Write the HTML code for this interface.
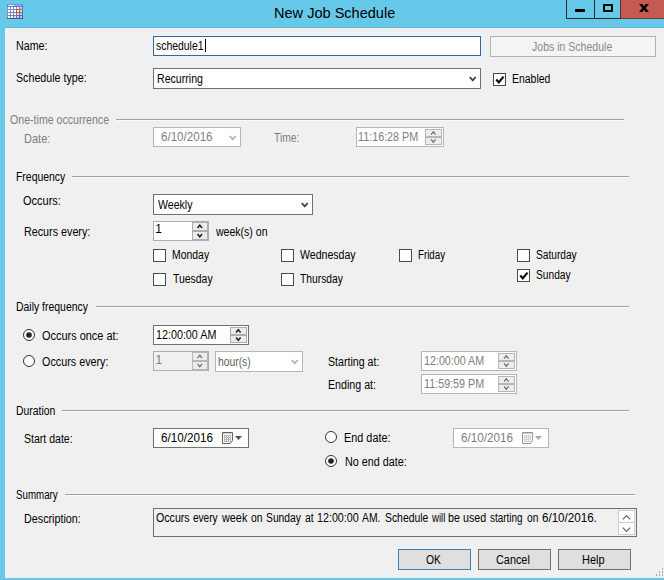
<!DOCTYPE html>
<html>
<head>
<meta charset="utf-8">
<title>New Job Schedule</title>
<style>
html,body{margin:0;padding:0;}
body{width:664px;height:580px;overflow:hidden;background:#67c9e9;position:relative;font-family:"Liberation Sans",sans-serif;font-size:11px;color:#000;}
*{box-sizing:border-box;}
.abs,.lbl,.box,.line,.cb,.btn{position:absolute;}
#client{position:absolute;left:5px;top:28px;width:659px;height:550px;background:#f0f0f0;}
.lbl{white-space:nowrap;font-size:12px;line-height:14px;height:14px;transform-origin:0 0;}
.line{height:2px;border-top:1px solid #a0a0a0;background:#fbfbfb;}
.box{background:#fff;border:1px solid #707070;}
.box.sp{border-color:#abadb3;}
.box.d{background:#f0f0f0;}
.box.dw{border-color:#b4b6bb;}
.cb{width:13px;height:13px;border:1px solid #4a4a4a;background:#fff;}
.btn{border:1px solid #707070;background:#dfdfdf;}
svg{position:absolute;overflow:visible;}
</style>
</head>
<body>
<div id="client"></div>

<svg style="left:7px;top:4px;" width="16" height="15" viewBox="0 0 16 15"><defs><linearGradient id="ig" x1="0" y1="0" x2="1" y2="1"><stop offset="0" stop-color="#93a4cf"/><stop offset="0.6" stop-color="#6f80b0"/><stop offset="1" stop-color="#46588a"/></linearGradient></defs><rect x="0" y="0" width="16" height="15" fill="url(#ig)"/><rect x="0" y="14" width="16" height="1" fill="#3d4d78" fill-opacity="0.7"/><rect x="0" y="0" width="16" height="3" fill="#4b7be0"/><rect x="0" y="0" width="16" height="1" fill="#6d96ea"/><rect x="1" y="1" width="6" height="1" fill="#eef3fd"/><rect x="7" y="1" width="8" height="1" fill="#8db0f2"/><rect x="1" y="3" width="2" height="2" fill="#fff"/><rect x="1" y="6" width="2" height="2" fill="#fff"/><rect x="1" y="9" width="2" height="2" fill="#fff"/><rect x="1" y="12" width="2" height="2" fill="#fff"/><rect x="4" y="3" width="2" height="2" fill="#fff"/><rect x="4" y="6" width="2" height="2" fill="#fff"/><rect x="4" y="9" width="2" height="2" fill="#fff"/><rect x="4" y="12" width="2" height="2" fill="#fff"/><rect x="7" y="3" width="2" height="2" fill="#fff"/><rect x="7" y="6" width="2" height="2" fill="#fff"/><rect x="7" y="9" width="2" height="2" fill="#fff"/><rect x="7" y="12" width="2" height="2" fill="#d5e0f6"/><rect x="10" y="3" width="2" height="2" fill="#fff"/><rect x="10" y="6" width="2" height="2" fill="#fff"/><rect x="10" y="9" width="2" height="2" fill="#d9e6fb"/><rect x="10" y="12" width="2" height="2" fill="#c3d2ee"/><path d="M13 3 H15 L13 5 Z" fill="#fff"/><path d="M15 3 V5 H13 Z" fill="#b9c6e6"/><rect x="13" y="6" width="2" height="2" fill="#d3def5"/><rect x="13" y="9" width="2" height="2" fill="#c3d2ef"/><rect x="13" y="12" width="2" height="2" fill="#b3c3e3"/><rect x="9.5" y="5.5" width="3" height="3" fill="#fff" stroke="#e24a12"/></svg>
<div class="abs" style="left:620px;top:0;width:44px;height:19px;background:#c55a50;border-bottom:1px solid #663a37;"></div>
<div class="abs" style="left:5px;top:27px;width:659px;height:1px;background:#62b4d4;"></div>
<div class="abs" style="left:566px;top:0;width:1px;height:19px;background:#2e2a2a;"></div>
<div class="abs" style="left:594px;top:0;width:1px;height:19px;background:#2e2a2a;"></div>
<div class="abs" style="left:620px;top:0;width:1px;height:19px;background:#5a3030;"></div>
<div class="abs" style="left:566px;top:18px;width:55px;height:1px;background:#2e2a2a;"></div>
<div class="abs" style="left:575px;top:9px;width:10px;height:3px;background:#000;"></div>
<div class="abs" style="left:603px;top:4px;width:10px;height:8px;border:2px solid #000;"></div>
<svg style="left:639px;top:4px;" width="10" height="8" viewBox="0 0 10 8"><path d="M0 0 H3.2 L5 2.2 L6.8 0 H10 L6.6 4 L10 8 H6.8 L5 5.8 L3.2 8 H0 L3.4 4 Z" fill="#000"/></svg>

<div class="lbl" style="left:15.91px;top:39px;transform:scaleX(0.8917);">Name:</div>
<div class="box " style="left:153px;top:36px;width:328px;height:20px;border-color:#30699f;"></div>
<div class="lbl" style="left:155.83px;top:39px;transform:scaleX(0.8685);">schedule1</div>
<div class="abs" style="left:205px;top:39px;width:1px;height:13px;background:#000;"></div>
<div class="btn" style="left:490px;top:36px;width:166px;height:21px;background:#f4f4f4;border-color:#adb2b5;"></div>
<div class="lbl" style="left:532.18px;top:40px;transform:scaleX(0.8782);color:#8a8a8a;">Jobs in Schedule</div>
<div class="lbl" style="left:16.36px;top:71px;transform:scaleX(0.8894);">Schedule type:</div>
<div class="box " style="left:153px;top:68px;width:328px;height:21px;"></div>
<div class="lbl" style="left:156.92px;top:72px;transform:scaleX(0.8836);">Recurring</div>
<svg style="left:468.7px;top:75.6px;" width="8" height="6" viewBox="0 0 8 6"><path d="M0.8 1 L3.75 4.4 L6.7 1" fill="none" stroke="#444" stroke-width="1.9"/></svg>
<div class="cb" style="left:493px;top:73px;"></div>
<svg style="left:493px;top:73px;" width="13" height="13" viewBox="0 0 13 13"><path d="M3.2 6.5 L5.8 9.3 L10.6 3.6" fill="none" stroke="#111" stroke-width="2.2"/></svg>
<div class="lbl" style="left:511.93px;top:72px;transform:scaleX(0.8710);">Enabled</div>
<div class="lbl" style="left:10.36px;top:113px;transform:scaleX(0.8842);color:#7e7e7e;">One-time occurrence</div>
<div class="line" style="left:116px;top:119px;width:508px;"></div>
<div class="lbl" style="left:23.88px;top:132px;transform:scaleX(0.9196);color:#7e7e7e;">Date:</div>
<div class="box dw" style="left:153px;top:127px;width:88px;height:20px;"></div>
<div class="lbl" style="left:161.07px;top:130px;transform:scaleX(0.9648);color:#7e7e7e;">6/10/2016</div>
<svg style="left:228.7px;top:134.6px;" width="8" height="6" viewBox="0 0 8 6"><path d="M0.8 1 L3.75 4.4 L6.7 1" fill="none" stroke="#b4b4b4" stroke-width="1.9"/></svg>
<div class="lbl" style="left:273.99px;top:131px;transform:scaleX(0.8566);color:#7e7e7e;">Time:</div>
<div class="box dw" style="left:356px;top:127px;width:88px;height:20px;"></div>
<div class="lbl" style="left:358.4px;top:130px;transform:scaleX(0.8966);color:#7e7e7e;">11:16:28 PM</div>
<svg style="left:425px;top:129px;" width="17" height="16" viewBox="0 0 17 16"><rect x="0.5" y="0.5" width="16" height="7" fill="#ededed" stroke="#b4b6bb"/><rect x="0.5" y="8.5" width="16" height="7" fill="#ededed" stroke="#b4b6bb"/><path d="M6.0 5.6 L8.3 2.8 L10.6 5.6" fill="none" stroke="#6f6f6f" stroke-width="1.2"/><path d="M6.0 10.4 L8.3 13.2 L10.6 10.4" fill="none" stroke="#6f6f6f" stroke-width="1.2"/></svg>
<div class="lbl" style="left:15.93px;top:170px;transform:scaleX(0.8682);">Frequency</div>
<div class="line" style="left:72px;top:176px;width:557px;"></div>
<div class="lbl" style="left:23.44px;top:194px;transform:scaleX(0.9157);">Occurs:</div>
<div class="box " style="left:153px;top:194px;width:160px;height:21px;"></div>
<div class="lbl" style="left:157.5px;top:198px;transform:scaleX(0.8795);">Weekly</div>
<svg style="left:300.7px;top:201.6px;" width="8" height="6" viewBox="0 0 8 6"><path d="M0.8 1 L3.75 4.4 L6.7 1" fill="none" stroke="#444" stroke-width="1.9"/></svg>
<div class="lbl" style="left:23.9px;top:225px;transform:scaleX(0.8958);">Recurs every:</div>
<div class="box sp" style="left:153px;top:221px;width:56px;height:20px;"></div>
<div class="lbl" style="left:155.2px;top:222px;">1</div>
<svg style="left:192px;top:222px;" width="16" height="18" viewBox="0 0 16 18"><rect x="0.5" y="0.5" width="15" height="8" fill="#ececec" stroke="#abadb3"/><rect x="0.5" y="9.5" width="15" height="8" fill="#ececec" stroke="#abadb3"/><path d="M5.5 6.1 L7.8 3.3 L10.1 6.1" fill="none" stroke="#202020" stroke-width="1.5"/><path d="M5.5 11.9 L7.8 14.7 L10.1 11.9" fill="none" stroke="#202020" stroke-width="1.5"/></svg>
<div class="lbl" style="left:216.1px;top:225px;transform:scaleX(0.8776);">week(s) on</div>
<div class="cb" style="left:153px;top:249px;"></div>
<div class="lbl" style="left:171.93px;top:248px;transform:scaleX(0.8695);">Monday</div>
<div class="cb" style="left:153px;top:273px;"></div>
<div class="lbl" style="left:172.58px;top:272px;transform:scaleX(0.8685);">Tuesday</div>
<div class="cb" style="left:281px;top:249px;"></div>
<div class="lbl" style="left:300.4px;top:248px;transform:scaleX(0.8810);">Wednesday</div>
<div class="cb" style="left:281px;top:273px;"></div>
<div class="lbl" style="left:300.19px;top:272px;transform:scaleX(0.8583);">Thursday</div>
<div class="cb" style="left:399px;top:249px;"></div>
<div class="lbl" style="left:417.99px;top:248px;transform:scaleX(0.8124);">Friday</div>
<div class="cb" style="left:517px;top:249px;"></div>
<div class="lbl" style="left:536.28px;top:248px;transform:scaleX(0.8463);">Saturday</div>
<div class="cb" style="left:517px;top:269px;"></div>
<svg style="left:517px;top:269px;" width="13" height="13" viewBox="0 0 13 13"><path d="M3.2 6.5 L5.8 9.3 L10.6 3.6" fill="none" stroke="#111" stroke-width="2.2"/></svg>
<div class="lbl" style="left:536.28px;top:268px;transform:scaleX(0.8497);">Sunday</div>
<div class="lbl" style="left:15.93px;top:300px;transform:scaleX(0.8703);">Daily frequency</div>
<div class="line" style="left:96px;top:306px;width:533px;"></div>
<svg style="left:23px;top:329px;" width="12" height="12" viewBox="0 0 12 12"><circle cx="6" cy="6" r="5.5" fill="#fff" stroke="#333" stroke-width="1"/><circle cx="6" cy="6" r="2.8" fill="#222"/></svg>
<div class="lbl" style="left:41.59px;top:329px;transform:scaleX(0.9109);">Occurs once at:</div>
<div class="box " style="left:153px;top:325px;width:96px;height:20px;"></div>
<div class="lbl" style="left:155.65px;top:328px;transform:scaleX(0.8954);">12:00:00 AM</div>
<svg style="left:230px;top:327px;" width="17" height="16" viewBox="0 0 17 16"><rect x="0.5" y="0.5" width="16" height="7" fill="#ececec" stroke="#abadb3"/><rect x="0.5" y="8.5" width="16" height="7" fill="#ececec" stroke="#abadb3"/><path d="M6.0 5.6 L8.3 2.8 L10.6 5.6" fill="none" stroke="#202020" stroke-width="1.5"/><path d="M6.0 10.4 L8.3 13.2 L10.6 10.4" fill="none" stroke="#202020" stroke-width="1.5"/></svg>
<svg style="left:23px;top:355px;" width="12" height="12" viewBox="0 0 12 12"><circle cx="6" cy="6" r="5.5" fill="#fff" stroke="#333" stroke-width="1"/></svg>
<div class="lbl" style="left:41.6px;top:355px;transform:scaleX(0.8986);">Occurs every:</div>
<div class="box sp d" style="left:153px;top:351px;width:56px;height:20px;"></div>
<div class="lbl" style="left:155.55px;top:353px;color:#7e7e7e;">1</div>
<svg style="left:192px;top:352px;" width="16" height="18" viewBox="0 0 16 18"><rect x="0.5" y="0.5" width="15" height="8" fill="#ededed" stroke="#b4b6bb"/><rect x="0.5" y="9.5" width="15" height="8" fill="#ededed" stroke="#b4b6bb"/><path d="M5.5 6.1 L7.8 3.3 L10.1 6.1" fill="none" stroke="#6f6f6f" stroke-width="1.2"/><path d="M5.5 11.9 L7.8 14.7 L10.1 11.9" fill="none" stroke="#6f6f6f" stroke-width="1.2"/></svg>
<div class="box dw" style="left:215px;top:351px;width:88px;height:21px;"></div>
<div class="lbl" style="left:218.4px;top:355px;transform:scaleX(0.8603);color:#606060;">hour(s)</div>
<svg style="left:290.7px;top:358.6px;" width="8" height="6" viewBox="0 0 8 6"><path d="M0.8 1 L3.75 4.4 L6.7 1" fill="none" stroke="#b4b4b4" stroke-width="1.9"/></svg>
<div class="lbl" style="left:328.36px;top:355px;transform:scaleX(0.8850);">Starting at:</div>
<div class="box dw" style="left:421px;top:351px;width:96px;height:20px;"></div>
<div class="lbl" style="left:423.81px;top:354px;transform:scaleX(0.8931);color:#7e7e7e;">12:00:00 AM</div>
<svg style="left:498px;top:353px;" width="17" height="16" viewBox="0 0 17 16"><rect x="0.5" y="0.5" width="16" height="7" fill="#ededed" stroke="#b4b6bb"/><rect x="0.5" y="8.5" width="16" height="7" fill="#ededed" stroke="#b4b6bb"/><path d="M6.0 5.6 L8.3 2.8 L10.6 5.6" fill="none" stroke="#6f6f6f" stroke-width="1.2"/><path d="M6.0 10.4 L8.3 13.2 L10.6 10.4" fill="none" stroke="#6f6f6f" stroke-width="1.2"/></svg>
<div class="lbl" style="left:327.91px;top:378px;transform:scaleX(0.8885);">Ending at:</div>
<div class="box dw" style="left:421px;top:374px;width:96px;height:20px;"></div>
<div class="lbl" style="left:423.8px;top:377px;transform:scaleX(0.8966);color:#7e7e7e;">11:59:59 PM</div>
<svg style="left:498px;top:376px;" width="17" height="16" viewBox="0 0 17 16"><rect x="0.5" y="0.5" width="16" height="7" fill="#ededed" stroke="#b4b6bb"/><rect x="0.5" y="8.5" width="16" height="7" fill="#ededed" stroke="#b4b6bb"/><path d="M6.0 5.6 L8.3 2.8 L10.6 5.6" fill="none" stroke="#6f6f6f" stroke-width="1.2"/><path d="M6.0 10.4 L8.3 13.2 L10.6 10.4" fill="none" stroke="#6f6f6f" stroke-width="1.2"/></svg>
<div class="lbl" style="left:15.93px;top:404px;transform:scaleX(0.8663);">Duration</div>
<div class="line" style="left:62px;top:410px;width:567px;"></div>
<div class="lbl" style="left:24.26px;top:432px;transform:scaleX(0.8781);">Start date:</div>
<div class="box " style="left:153px;top:428px;width:96px;height:20px;"></div>
<div class="lbl" style="left:160.91px;top:431px;transform:scaleX(0.9714);">6/10/2016</div>
<svg style="left:222px;top:432px;" width="21" height="12" viewBox="0 0 21 12"><path d="M0.5 0.5 H10.5 V8.5 L8.5 11.5 H0.5 Z" fill="#fff" stroke="#6b5e5c"/><rect x="1" y="1" width="9" height="1" fill="#d0d0d0"/><rect x="2" y="3" width="7" height="7" fill="#b4b8c6"/><rect x="3" y="4" width="1" height="1" fill="#fff"/><rect x="3" y="6" width="1" height="1" fill="#fff"/><rect x="3" y="8" width="1" height="1" fill="#fff"/><rect x="5" y="4" width="1" height="1" fill="#fff"/><rect x="5" y="6" width="1" height="1" fill="#fff"/><rect x="5" y="8" width="1" height="1" fill="#fff"/><rect x="7" y="4" width="1" height="1" fill="#fff"/><rect x="7" y="6" width="1" height="1" fill="#fff"/><rect x="7" y="8" width="1" height="1" fill="#fff"/><path d="M13 4 H20 L16.5 8 Z" fill="#44546f"/></svg>
<svg style="left:325px;top:431px;" width="12" height="12" viewBox="0 0 12 12"><circle cx="6" cy="6" r="5.5" fill="#fff" stroke="#333" stroke-width="1"/></svg>
<div class="lbl" style="left:344.49px;top:431px;transform:scaleX(0.9056);">End date:</div>
<div class="box dw" style="left:453px;top:428px;width:96px;height:20px;"></div>
<div class="lbl" style="left:460.91px;top:431px;transform:scaleX(0.9714);color:#7e7e7e;">6/10/2016</div>
<svg style="left:522px;top:432px;" width="21" height="12" viewBox="0 0 21 12"><path d="M0.5 0.5 H10.5 V8.5 L8.5 11.5 H0.5 Z" fill="#fff" stroke="#9a9494"/><rect x="1" y="1" width="9" height="1" fill="#d0d0d0"/><rect x="2" y="3" width="7" height="7" fill="#cfd1d8"/><rect x="3" y="4" width="1" height="1" fill="#fff"/><rect x="3" y="6" width="1" height="1" fill="#fff"/><rect x="3" y="8" width="1" height="1" fill="#fff"/><rect x="5" y="4" width="1" height="1" fill="#fff"/><rect x="5" y="6" width="1" height="1" fill="#fff"/><rect x="5" y="8" width="1" height="1" fill="#fff"/><rect x="7" y="4" width="1" height="1" fill="#fff"/><rect x="7" y="6" width="1" height="1" fill="#fff"/><rect x="7" y="8" width="1" height="1" fill="#fff"/><path d="M13 4 H20 L16.5 8 Z" fill="#a8aab0"/></svg>
<svg style="left:325px;top:455px;" width="12" height="12" viewBox="0 0 12 12"><circle cx="6" cy="6" r="5.5" fill="#fff" stroke="#333" stroke-width="1"/><circle cx="6" cy="6" r="2.8" fill="#222"/></svg>
<div class="lbl" style="left:344.5px;top:455px;transform:scaleX(0.8989);">No end date:</div>
<div class="lbl" style="left:16.29px;top:488px;transform:scaleX(0.8118);">Summary</div>
<div class="line" style="left:65px;top:494px;width:570px;"></div>
<div class="lbl" style="left:23.8px;top:512px;transform:scaleX(0.8963);">Description:</div>
<div class="box " style="left:153px;top:508px;width:484px;height:29px;background:#f0f0f0;border-color:#6e6e6e;"></div>
<div class="abs" id="desc" style="left:0;top:0;width:0;height:0;">
<span class="lbl" style="left:155.66px;top:511px;transform:scaleX(0.8865);">Occurs</span>
<span class="lbl" style="left:192.68px;top:511px;transform:scaleX(0.8383);">every</span>
<span class="lbl" style="left:221.6px;top:511px;transform:scaleX(0.9036);">week</span>
<span class="lbl" style="left:250.67px;top:511px;transform:scaleX(0.8653);">on</span>
<span class="lbl" style="left:266.17px;top:511px;transform:scaleX(0.8596);">Sunday</span>
<span class="lbl" style="left:304.67px;top:511px;transform:scaleX(0.8632);">at</span>
<span class="lbl" style="left:317.41px;top:511px;transform:scaleX(0.8928);">12:00:00</span>
<span class="lbl" style="left:362.3px;top:511px;transform:scaleX(0.8593);">AM.</span>
<span class="lbl" style="left:384.87px;top:511px;transform:scaleX(0.8653);">Schedule</span>
<span class="lbl" style="left:431.9px;top:511px;transform:scaleX(0.8000);">will</span>
<span class="lbl" style="left:448.23px;top:511px;transform:scaleX(0.8917);">be</span>
<span class="lbl" style="left:463.13px;top:511px;transform:scaleX(0.8898);">used</span>
<span class="lbl" style="left:489.99px;top:511px;transform:scaleX(0.8286);">starting</span>
<span class="lbl" style="left:526.57px;top:511px;transform:scaleX(0.8571);">on</span>
<span class="lbl" style="left:542.22px;top:511px;transform:scaleX(0.9665);">6/10/2016.</span>
</div>
<svg style="left:618px;top:510px;" width="17" height="25" viewBox="0 0 17 25"><rect x="0.5" y="0.5" width="16" height="12" fill="#fff" stroke="#cdcdcd"/><rect x="0.5" y="12.5" width="16" height="12" fill="#fff" stroke="#cdcdcd"/><path d="M4.8 9.4 L8.5 5.7 L12.2 9.4" fill="none" stroke="#606060" stroke-width="1.2"/><path d="M4.8 17.6 L8.5 21.3 L12.2 17.6" fill="none" stroke="#606060" stroke-width="1.2"/></svg>
<div class="btn" style="left:398px;top:549px;width:73px;height:21px;border-color:#3a80b8;"></div>
<div class="btn" style="left:478px;top:549px;width:73px;height:21px;"></div>
<div class="btn" style="left:558px;top:549px;width:73px;height:21px;"></div>
<div class="lbl" style="left:425.67px;top:553px;transform:scaleX(0.8597);">OK</div>
<div class="lbl" style="left:496.35px;top:553px;transform:scaleX(0.9056);">Cancel</div>
<div class="lbl" style="left:582.19px;top:553px;transform:scaleX(0.9118);">Help</div>
<svg style="left:0;top:0;" width="664" height="580"><rect x="661" y="568" width="1" height="1" fill="#fff"/><rect x="662" y="568" width="1" height="2" fill="#a6a6a6"/><rect x="658" y="571" width="1" height="1" fill="#fff"/><rect x="659" y="571" width="1" height="2" fill="#a6a6a6"/><rect x="661" y="571" width="1" height="1" fill="#fff"/><rect x="662" y="571" width="1" height="2" fill="#a6a6a6"/><rect x="655" y="574" width="1" height="1" fill="#fff"/><rect x="656" y="574" width="1" height="2" fill="#a6a6a6"/><rect x="658" y="574" width="1" height="1" fill="#fff"/><rect x="659" y="574" width="1" height="2" fill="#a6a6a6"/><rect x="661" y="574" width="1" height="1" fill="#fff"/><rect x="662" y="574" width="1" height="2" fill="#a6a6a6"/></svg>
<div class="lbl" style="left:273.79px;top:4px;font-size:15px;line-height:18px;height:18px;transform:scaleX(0.9696);">New Job Schedule</div>
</body>
</html>
